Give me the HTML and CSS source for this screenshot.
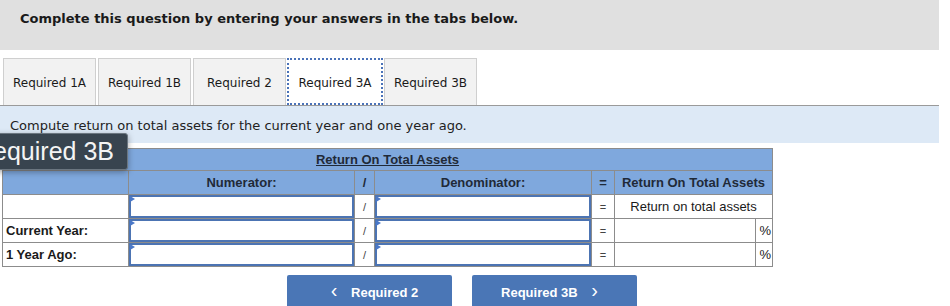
FILE: index.html
```html
<!DOCTYPE html>
<html lang="en">
<head>
  <meta charset="UTF-8" />
  <title>Required 3A</title>
  <link rel="stylesheet" href="styles.css">
</head>
<body>
  <div class="intro">
    <p>Complete this question by entering your answers in the tabs below.</p>
  </div>

  <div class="tabs">
    <button class="tab">Required 1A</button>
    <button class="tab">Required 1B</button>
    <button class="tab">Required 2</button>
    <button class="tab ativo">Required 3A</button>
    <button class="tab">Required 3B</button>
  </div>

  <div class="instrucao">Compute return on total assets for the current year and one year ago.</div>

  <div class="area">
    <div class="dica">Required 3B</div>
    <table class="grade">
      <thead>
        <tr>
          <th colspan="7" class="titulo"><u>Return On Total Assets</u></th>
        </tr>
        <tr>
          <th class="col-rotulo"></th>
          <th class="col-num">Numerator:</th>
          <th class="col-op">/</th>
          <th class="col-den">Denominator:</th>
          <th class="col-eq">=</th>
          <th colspan="2">Return On Total Assets</th>
        </tr>
      </thead>
      <tbody>
        <tr>
          <td></td>
          <td class="entrada"><input type="text" /></td>
          <td class="op">/</td>
          <td class="entrada"><input type="text" /></td>
          <td class="op">=</td>
          <td colspan="2" class="resultado">Return on total assets</td>
        </tr>
        <tr>
          <td class="rotulo">Current Year:</td>
          <td class="entrada"><input type="text" /></td>
          <td class="op">/</td>
          <td class="entrada"><input type="text" /></td>
          <td class="op">=</td>
          <td class="valor"></td>
          <td class="pct">%</td>
        </tr>
        <tr>
          <td class="rotulo">1 Year Ago:</td>
          <td class="entrada"><input type="text" /></td>
          <td class="op">/</td>
          <td class="entrada"><input type="text" /></td>
          <td class="op">=</td>
          <td class="valor"></td>
          <td class="pct">%</td>
        </tr>
      </tbody>
    </table>
  </div>

  <div class="navegacao">
    <button class="btn-nav"><span class="seta">&lsaquo;</span> Required 2</button>
    <button class="btn-nav">Required 3B <span class="seta">&rsaquo;</span></button>
  </div>
</body>
</html>
```

FILE: styles.css
```css
body {
  margin: 0;
  padding: 0;
  background: #fff;
  font-family: 'DejaVu Sans', Verdana, sans-serif;
  color: #1a1a1a;
}
.intro {
  width: 939px;
  height: 50px;
  background: #e0e0e0;
  box-sizing: border-box;
  padding: 11px 20px;
}
.intro p {
  margin: 0;
  font-size: 13px;
  font-weight: bold;
}
.tabs {
  display: flex;
  gap: 2px;
  margin-top: 8px;
  padding-left: 3px;
}
.tab {
  width: 93px;
  height: 47px;
  padding: 2px 0 0;
  background: #f2f2f2;
  border: 1px solid #cfcfcf;
  border-bottom: none;
  font-family: 'DejaVu Sans', Verdana, sans-serif;
  font-size: 12px;
  color: #1a1a1a;
}
.tab.ativo {
  width: 96px;
  margin: 0 -1px;
  background: #fff;
  border: 2px dotted #4a72b8;
}
.instrucao {
  width: 939px;
  height: 38px;
  box-sizing: border-box;
  background: #dde9f6;
  border-top: 1px solid #9a9a9a;
  padding: 12px 10px 0;
  font-size: 13px;
  color: #222;
}
.area {
  position: relative;
  margin-top: 5px;
  padding-left: 2px;
}
.dica {
  position: absolute;
  left: -29px;
  top: -15px;
  width: 157px;
  height: 37px;
  box-sizing: border-box;
  background: #38444f;
  border: 1px solid #6b7680;
  border-radius: 3px;
  color: #f4f4f4;
  font-family: 'Liberation Sans', Arial, sans-serif;
  font-size: 25px;
  padding: 3px 0 0 3px;
  box-shadow: 0 2px 6px rgba(0, 0, 0, 0.35);
  z-index: 5;
}
.grade {
  border-collapse: collapse;
  font-family: 'Liberation Sans', Arial, sans-serif;
  font-size: 13px;
  color: #1a1a1a;
}
.grade th,
.grade td {
  border: 1px solid #8c8c8c;
  padding: 0;
  height: 23px;
  text-align: center;
}
.grade th {
  background: #7fa8dd;
  font-weight: bold;
  color: #1f2a38;
}
.grade th.titulo {
  height: 21px;
}
.col-rotulo { width: 125px; }
.col-num { width: 225px; }
.col-op { width: 19px; }
.col-den { width: 216px; }
.col-eq { width: 22px; }
td.rotulo {
  text-align: left;
  font-weight: bold;
  padding-left: 3px;
}
td.entrada {
  position: relative;
}
td.entrada input {
  display: block;
  width: 100%;
  height: 23px;
  box-sizing: border-box;
  border: 2px solid #4c74b3;
  margin: 0;
}
td.entrada::before {
  content: "";
  position: absolute;
  left: 1px;
  top: 1px;
  border-top: 3px solid transparent;
  border-bottom: 3px solid transparent;
  border-left: 5px solid #4a78c8;
}
td.op {
  font-size: 11px;
  color: #444;
}
td.valor {
  width: 140px;
}
td.pct {
  width: 15px;
  text-align: right;
  padding-right: 1px;
}
.navegacao {
  display: flex;
  gap: 20px;
  margin-top: 8px;
  padding-left: 287px;
}
.btn-nav {
  width: 165px;
  height: 36px;
  border: none;
  border-radius: 2px;
  background: #4a76b6;
  color: #fff;
  font-family: 'Liberation Sans', Arial, sans-serif;
  font-weight: bold;
  font-size: 13px;
  padding-bottom: 6px;
}
.seta {
  font-size: 20px;
  font-weight: normal;
  margin: 0 10px;
}
```
